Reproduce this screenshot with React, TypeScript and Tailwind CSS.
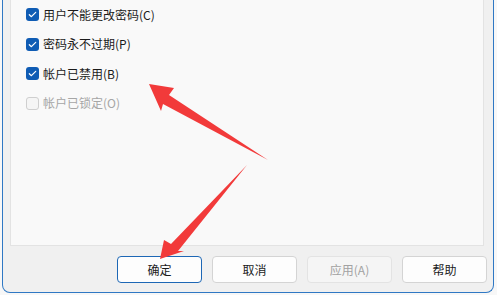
const font = { fontFamily: '"Microsoft YaHei", "Noto Sans CJK SC", "Noto Sans", sans-serif' }

interface Option {
  label: string
  checked: boolean
  disabled?: boolean
}

const options: Option[] = [
  { label: '用户不能更改密码(C)', checked: true },
  { label: '密码永不过期(P)', checked: true },
  { label: '帐户已禁用(B)', checked: true },
  { label: '帐户已锁定(O)', checked: false, disabled: true },
]

function CheckBox({ checked, disabled }: { checked: boolean; disabled?: boolean }) {
  if (checked) {
    return (
      <span className="flex h-[13px] w-[13px] items-center justify-center rounded-[3px] bg-[#0f5cb4]">
        <svg width="13" height="13" viewBox="0 0 13 13" fill="none">
          <path d="M3.3 6.7 L5.4 8.7 L9.7 4.3" stroke="white" strokeWidth="1.2" strokeLinecap="round" strokeLinejoin="round" />
        </svg>
      </span>
    )
  }
  return (
    <span
      className={
        disabled
          ? 'h-[13px] w-[13px] rounded-[3px] border border-[#cfcfcf] bg-[#f5f5f5]'
          : 'h-[13px] w-[13px] rounded-[3px] border border-[#8a8a8a] bg-white'
      }
    />
  )
}

function Button({ label, primary, disabled }: { label: string; primary?: boolean; disabled?: boolean }) {
  let cls = 'flex h-[27px] w-[85px] items-center justify-center rounded-[4px] border text-[12px] '
  if (primary) cls += 'border-[#1d67b5] bg-[#fdfdfd] text-[#1b1b1b]'
  else if (disabled) cls += 'border-[#e3e3e3] bg-[#f5f5f5] text-[#a2a2a2]'
  else cls += 'border-[#d4d4d4] bg-[#fdfdfd] text-[#1b1b1b]'
  return (
    <button type="button" className={cls} style={font}>
      {label}
    </button>
  )
}

export default function App() {
  return (
    <div className="relative h-[295px] w-[497px] overflow-hidden bg-[#f7f7f7]" style={font}>
      <div className="ml-[2px] flex h-[293px] w-[492px] flex-col rounded-b-[8px] border-x border-b border-[#2f78c4] bg-[#f0f0f0]">
        {/* tab page */}
        <div className="ml-[7px] flex h-[246px] w-[474px] flex-col gap-[16.5px] border-x border-b border-[#e3e3e3] bg-[#f9f9f9] pl-[15px] pt-[8px]">
          {options.map((o) => (
            <label key={o.label} className="flex h-[13px] items-center gap-[4px]">
              <CheckBox checked={o.checked} disabled={o.disabled} />
              <span className={o.disabled ? 'text-[12px] text-[#a6a6a6]' : 'text-[12px] text-[#1b1b1b]'}>{o.label}</span>
            </label>
          ))}
        </div>

        {/* footer */}
        <div className="flex justify-end gap-[10px] pr-[6px] pt-[10px]">
          <Button label="确定" primary />
          <Button label="取消" />
          <Button label="应用(A)" disabled />
          <Button label="帮助" />
        </div>
      </div>

      {/* annotation arrows */}
      <svg className="pointer-events-none absolute left-0 top-0" width="497" height="295" viewBox="0 0 497 295">
        <polygon points="149,84 174,88 169,95 268,160 163,104 161,111" fill="#f23a3a" />
        <polygon points="160,259 164,240 171,244 247,165 178,251 184,251" fill="#f23a3a" />
      </svg>
    </div>
  )
}
